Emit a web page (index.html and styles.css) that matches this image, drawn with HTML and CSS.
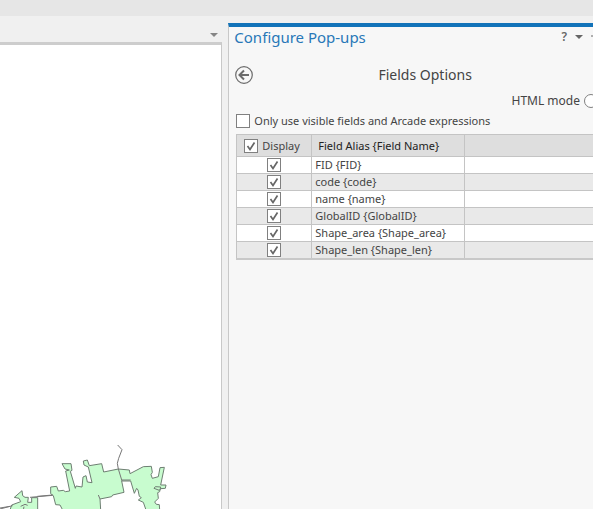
FILE: index.html
```
<!DOCTYPE html>
<html lang="en">
  <head>
    <title>Configure Pop-ups</title>
    <meta charset="utf-8" />
    <meta name="viewport" content="width=device-width, initial-scale=1.0" />
    <link rel="stylesheet" href="styles.css">
  </head>
  <body>
    <div class="ribbon"></div>
    <div class="workspace">
      <main class="map-view">
        <div class="map-tabs">
          <button class="icon-button" type="button" aria-label="View list">
            <svg width="8" height="4" viewBox="0 0 8 4"><path d="M0 0h8L4 4z" fill="#858585" /></svg>
          </button>
        </div>
        <div class="map">
          <svg class="parcels" width="180" height="74" viewBox="0 0 540 222">
            <path class="area" d="M30 225L35 210 62 200 57 190 43 187 66 167 68 182 75 187 85 187 83 202 95 202 95 188 113 188 113 225z" />
            <path class="area" d="M188 225L180 210 167 209 160 182 152 176 152 156 170 154 175 168 190 166 196 170 209 168 197 108 208 105 195 102 186 86 213 86 216 106 211 109 226 160 228 153 246 156 249 126 258 122 262 141 276 143 265 96 252 90 250 78 262 75 268 92 305 86 311 111 355 102 388 105 390 116 430 95 454 94 457 112 453 119 457 130 475 125 480 98 493 97 482 150 498 150 496 160 482 161 478 166 462 160 466 155 482 156 479 170 473 173 475 190 464 201 469 208 478 209 479 225 438 225 430 202 415 195 424 188 418 184 414 165 410 160 403 175 392 138 365 138 372 172 338 180 335 185 300 192 302 225z" />
            <path class="edge" d="M0 219L30 214M90 187L158 181M0 222L38 212M112 184L158 180M295 180L300 192M355 102L352 85 356 70 366 44 353 30M355 102L366 138M366 135L392 135M62 214L75 208 83 211M70 225L72 215" />
          </svg>
        </div>
      </main>

      <aside class="pane">
        <header class="pane-header">
          <h1>Configure Pop-ups</h1>
          <div class="pane-tools">
            <button class="icon-button help" type="button" aria-label="Help">?</button>
            <button class="icon-button" type="button" aria-label="Pane menu">
              <svg width="8" height="4" viewBox="0 0 8 4"><path d="M0 0h8L4 4z" fill="#666" /></svg>
            </button>
            <button class="icon-button pin" type="button" aria-label="Auto hide">
              <svg width="10" height="12" viewBox="0 0 10 12"><path d="M2 1h6M2.500 1v6M7 1v6M0 7h10M5 7v5" fill="none" stroke="#666" /></svg>
            </button>
          </div>
        </header>

        <div class="pane-title">
          <button class="icon-button" type="button" aria-label="Back">
            <svg width="18" height="18" viewBox="0 0 18 18" fill="none" stroke="#6b6b6b">
              <circle cx="9" cy="9" r="8.300" stroke-width="1.200" />
              <path d="M14 9H5M9 4.500L4.500 9 9 13.500" stroke-width="2" />
            </svg>
          </button>
          <h2>Fields Options</h2>
        </div>

        <label class="mode">HTML mode <input type="radio" name="mode" /></label>
        <label class="visible-only"><input type="checkbox" /> Only use visible fields and Arcade expressions</label>

        <table class="fields">
          <colgroup>
            <col class="col-display">
            <col class="col-alias">
            <col>
          </colgroup>
          <thead>
            <tr>
              <th><label><input type="checkbox" checked /> Display</label></th>
              <th class="alias">Field Alias {Field Name}</th>
              <th></th>
            </tr>
          </thead>
          <tbody>
            <tr><td><input type="checkbox" aria-label="FID" checked /></td><td>FID {FID}</td><td></td></tr>
            <tr><td><input type="checkbox" aria-label="code" checked /></td><td>code {code}</td><td></td></tr>
            <tr><td><input type="checkbox" aria-label="name" checked /></td><td>name {name}</td><td></td></tr>
            <tr><td><input type="checkbox" aria-label="GlobalID" checked /></td><td>GlobalID {GlobalID}</td><td></td></tr>
            <tr><td><input type="checkbox" aria-label="Shape_area" checked /></td><td>Shape_area {Shape_area}</td><td></td></tr>
            <tr><td><input type="checkbox" aria-label="Shape_len" checked /></td><td>Shape_len {Shape_len}</td><td></td></tr>
          </tbody>
        </table>
      </aside>
    </div>
  </body>
</html>
```
FILE: styles.css
```
* {
  box-sizing: border-box;
}

body {
  display: flex;
  flex-direction: column;
  height: 100vh;
  margin: 0;
  overflow: hidden;
  background-color: #f0f0f0;
  color: #444;
  font-family: 'Noto Sans', 'Open Sans', sans-serif;
  font-size: 11px;
  line-height: 16px;
}

h1,
h2 {
  margin: 0;
  font-size: 15px;
  font-weight: 400;
  line-height: 20px;
}

svg {
  display: block;
}

.ribbon {
  flex: none;
  height: 16px;
  background-color: #e6e6e6;
}

.workspace {
  display: flex;
  flex: 1;
  gap: 6px;
  min-height: 0;
}

.map-view {
  display: flex;
  flex: 1;
  flex-direction: column;
}

.map-tabs {
  display: flex;
  justify-content: flex-end;
  align-items: flex-end;
  height: 26px;
  padding: 0 4px 5px;
}

.map {
  display: flex;
  flex: 1;
  align-items: flex-end;
  border-top: 3px solid #cdcdcd;
  border-right: 1px solid #c8c8c8;
  background-color: #fff;
}

.area {
  fill: #c8fccf;
  stroke: #6e7f72;
  stroke-width: 3;
}

.edge {
  fill: none;
  stroke: #777;
  stroke-width: 3;
}

.icon-button {
  display: block;
  padding: 0;
  border: 0;
  background: none;
  color: #666;
  font: inherit;
}

.pane {
  flex: none;
  width: 61.5%;
  margin-top: 7px;
  overflow: hidden;
  border-top: 4px solid #1273b9;
  border-left: 1px solid #c8c8c8;
  background-color: #f7f7f7;
}

.pane-header {
  display: flex;
  justify-content: space-between;
  height: 38px;
  padding-left: 5px;
}

.pane-header h1 {
  color: #2878b8;
}

.pane-tools {
  display: flex;
  align-items: center;
  gap: 8px;
  height: 20px;
  margin-right: -8px;
}

.help {
  font-size: 12px;
  font-weight: 600;
}

.pin {
  align-self: flex-start;
  margin-top: 2px;
}

.pane-title {
  display: flex;
  align-items: center;
  padding: 0 6px;
}

.pane-title h2 {
  flex: 1;
  margin-left: 10px;
  text-align: center;
  font-size: 14px;
}

.mode {
  display: flex;
  justify-content: flex-end;
  align-items: center;
  gap: 4px;
  margin: 8px -5px 4px 0;
  font-size: 12px;
}

.visible-only {
  display: flex;
  align-items: center;
  gap: 4px;
  padding-left: 7px;
}

input {
  appearance: none;
  flex: none;
  width: 14px;
  height: 14px;
  margin: 0;
  border: 1px solid #808080;
  background-color: #fff;
}

input[type='radio'] {
  border-radius: 50%;
}

input:checked {
  background-image: url("data:image/svg+xml,%3Csvg xmlns='http://www.w3.org/2000/svg' viewBox='0 0 12 12'%3E%3Cpath d='M2.500 6l2.500 3.500L9.500 2.500' fill='none' stroke='%23666' stroke-width='1.700'/%3E%3C/svg%3E");
}

.fields {
  width: calc(100% - 7px);
  margin: 5px 0 0 7px;
  border-collapse: collapse;
  border-bottom: 2px solid #c8c8c8;
  border-left: 1px solid #c8c8c8;
  table-layout: fixed;
}

.col-display {
  width: 75px;
}

.col-alias {
  width: 153px;
}

.fields th,
.fields td {
  height: 17px;
  padding: 0 3px;
  border: 1px solid #c4c4c4;
  border-right-width: 0;
  line-height: 14px;
  text-align: left;
}

.fields th {
  height: 22px;
  padding: 0 7px;
  background-color: #dedede;
  font-weight: 400;
}

.fields .alias {
  padding-left: 6px;
  color: #222;
}

.fields th label {
  display: flex;
  align-items: center;
  gap: 4px;
}

.fields td:first-child {
  text-align: center;
}

.fields td input {
  display: block;
  margin: 0 auto;
}

.fields tbody tr {
  background-color: #fff;
}

.fields tbody tr:nth-child(even) {
  background-color: #e9e9e9;
}
```
